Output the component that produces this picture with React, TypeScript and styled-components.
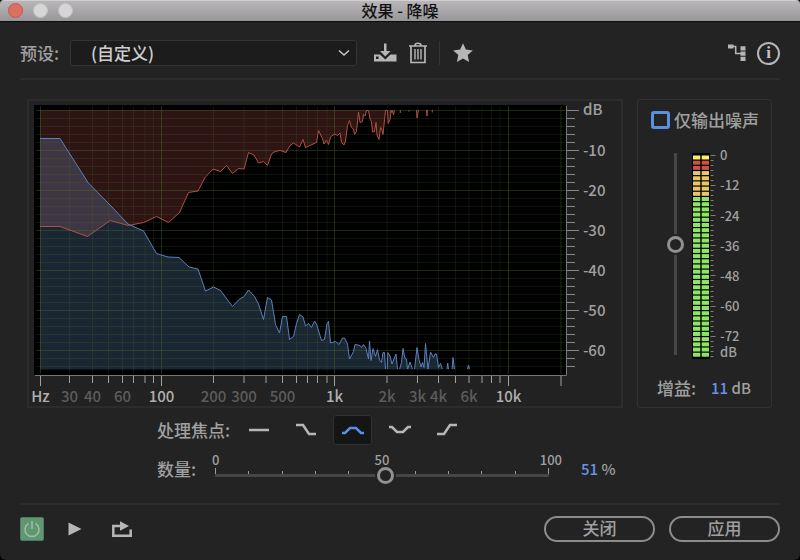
import React, { useState } from "react";
import styled, { createGlobalStyle } from "styled-components";

const GlobalStyle = createGlobalStyle`
  * { box-sizing: border-box; }
  html, body { margin: 0; background: #000; }
  body, button, select, input {
    font-family: "Noto Sans CJK SC", "Noto Sans", sans-serif;
    font-weight: 500;
  }
`;

const FONT = '"Noto Sans CJK SC", "Noto Sans", sans-serif';

const Window = styled.main`
  display: flex;
  flex-direction: column;
  min-height: 100vh;
  background: #232323;
  color: #a0a0a0;
  font-size: 17px;
  line-height: 24px;
  border-radius: 4px 4px 6px 6px;
  overflow: hidden;
`;

const TitleBar = styled.header`
  display: grid;
  grid-template-columns: 1fr auto 1fr;
  align-items: center;
  height: 22px;
  padding: 0 8px 2px;
  background: linear-gradient(#b8b6b8, #989698);
  border-top: 1px solid #cfcfcf;
  border-bottom: 1px solid #0c0c0c;
`;

const Lights = styled.div`
  display: flex;
  gap: 10px;
`;

const Light = styled.button<{ $close?: boolean }>`
  width: 15px;
  height: 15px;
  padding: 0;
  border-radius: 50%;
  border: 1px solid ${(p) => (p.$close ? "#c4584c" : "#c2c0c2")};
  background: ${(p) => (p.$close ? "#dd6e61" : "#d6d6d6")};
`;

const Title = styled.h1`
  margin: 0;
  font-size: 16px;
  line-height: 18px;
  font-weight: 500;
  color: #111;
`;

const Toolbar = styled.div`
  display: flex;
  align-items: center;
  margin: 0 20px;
  padding: 18px 0 12px;
  border-bottom: 2px solid #2c2c2c;
`;

const PresetLabel = styled.label`
  width: 50px;
  white-space: nowrap;
`;

const SelectWrap = styled.div`
  display: grid;
  flex: 0 1 287px;
  align-items: center;
  margin-right: 16px;
  > * { grid-area: 1 / 1; }
  > svg { justify-self: end; margin-right: 7px; pointer-events: none; }
`;

const Select = styled.select`
  appearance: none;
  width: 100%;
  height: 26px;
  padding: 0 28px 0 20px;
  border: 1px solid #343434;
  border-radius: 3px;
  background: #1c1c1c;
  color: #cfcfcf;
  font-size: 17px;
  line-height: 24px;
`;

const IconButton = styled.button<{ $w?: number }>`
  display: grid;
  place-items: center;
  width: ${(p) => p.$w ?? 24}px;
  height: 24px;
  padding: 0;
  border: 0;
  background: none;
  color: #b6b6b6;
  > svg { display: block; }
`;

const IconGroup = styled.div<{ $gap: number; $end?: boolean }>`
  display: flex;
  align-items: center;
  gap: ${(p) => p.$gap}px;
  margin-left: ${(p) => (p.$end ? "auto" : "0")};
`;

const Divider = styled.span`
  width: 1px;
  height: 24px;
  background: #343434;
`;

const InfoButton = styled.button`
  width: 23px;
  height: 23px;
  padding: 0;
  border: 2px solid #b6b6b6;
  border-radius: 50%;
  background: none;
  color: #c4c4c4;
  font-family: "Liberation Serif", serif;
  font-weight: 700;
  font-size: 17px;
  line-height: 18px;
`;

const Panels = styled.section`
  display: flex;
  align-items: stretch;
  gap: 14px;
  padding: 19px 28px 0 27px;
`;

const ChartPanel = styled.div`
  flex: 1;
  min-width: 0;
  border: 2px solid #2c2c2c;
  background: #222;
  > svg { display: block; width: 100%; height: auto; overflow: visible; }
`;

const GainPanel = styled.div`
  display: flex;
  flex-direction: column;
  flex: 0 0 135px;
  padding: 8px 13px 7px;
  border: 1px solid #313131;
  border-radius: 3px;
`;

const CheckLabel = styled.label`
  display: flex;
  align-items: center;
  gap: 4px;
  white-space: nowrap;
  margin-right: -8px;
`;

const Check = styled.input`
  appearance: none;
  flex: none;
  width: 19px;
  height: 18px;
  margin: 0;
  border: 3px solid #5c8ee2;
  border-radius: 3px;
  &:checked { background: #5c8ee2; }
`;

const GainBody = styled.div`
  display: flex;
  align-items: flex-start;
  gap: 8px;
  padding: 21px 0 0 16px;
  > svg { overflow: visible; }
`;

const VerticalRange = styled.input`
  appearance: none;
  writing-mode: vertical-lr;
  direction: rtl;
  width: 17px;
  height: 202px;
  margin: 0;
  background: linear-gradient(#464646, #464646) center / 3px 100% no-repeat;
  &::-webkit-slider-thumb {
    appearance: none;
    width: 17px;
    height: 17px;
    border: 3px solid #919191;
    border-radius: 50%;
    background: #232323;
    box-shadow: 0 0 0 2px #232323;
  }
`;

const GainRow = styled.div`
  display: flex;
  align-items: center;
  justify-content: space-between;
  margin-top: auto;
  padding: 0 7px 0 6px;
`;

const Value = styled.output`
  font-size: 15px;
  white-space: pre;
  > b { color: #6596e6; font-weight: 500; }
`;

const Controls = styled.section`
  display: flex;
  flex-direction: column;
  padding: 7px 157px 0;
`;

const FocusRow = styled.div`
  display: flex;
  align-items: center;
  gap: 8px;
  height: 30px;
`;

const RowLabel = styled.span<{ $w: number }>`
  flex: 0 0 ${(p) => p.$w}px;
  white-space: nowrap;
`;

const FocusButton = styled.button<{ $on: boolean }>`
  display: grid;
  place-items: center;
  width: 39px;
  height: 30px;
  padding: 0;
  border: 1px solid ${(p) => (p.$on ? "#313131" : "transparent")};
  border-radius: 3px;
  background: ${(p) => (p.$on ? "#151515" : "none")};
  color: ${(p) => (p.$on ? "#5c8ee2" : "#b6b6b6")};
`;

const AmountRow = styled.div`
  display: flex;
  align-items: center;
  height: 48px;
`;

const Scale = styled.div`
  flex: 0 1 334px;
  display: grid;
  grid-template-rows: 12px 18px;
  > * { grid-column: 1; }
`;

const ScaleNumbers = styled.div`
  display: grid;
  grid-template-columns: 1fr 1fr 1fr;
  margin: 0 -13px;
  font-size: 13px;
  line-height: 12px;
  > :nth-child(1) { padding-left: 10px; }
  > :nth-child(2) { text-align: center; }
  > :nth-child(3) { text-align: right; }
`;

const Ticks = styled.div`
  grid-row: 2;
  display: flex;
  align-items: flex-end;
  justify-content: space-between;
  height: 9px;
`;

const Tick = styled.i<{ $major: boolean }>`
  width: 1px;
  height: ${(p) => (p.$major ? 7 : 4)}px;
  background: #999;
`;

const Range = styled.input`
  appearance: none;
  grid-row: 2;
  width: 100%;
  height: 18px;
  margin: 0;
  background: linear-gradient(#464646, #464646) center / 100% 3px no-repeat;
  &::-webkit-slider-thumb {
    appearance: none;
    width: 17px;
    height: 17px;
    border: 3px solid #919191;
    border-radius: 50%;
    background: #232323;
    box-shadow: 0 0 0 2px #232323;
  }
`;

const AmountValue = styled(Value)`
  margin-left: 32px;
`;

const Footer = styled.footer`
  display: flex;
  align-items: center;
  margin: auto 20px 0;
  padding: 11px 0 18px;
  border-top: 2px solid #2c2c2c;
`;

const PowerButton = styled.button`
  display: grid;
  place-items: center;
  width: 24px;
  height: 24px;
  padding: 0;
  border: 1px solid #4b7c5b;
  border-radius: 2px;
  background: #5d9870;
  color: #a9b5ad;
`;

const PillGroup = styled.div`
  display: flex;
  gap: 14px;
  margin-left: auto;
`;

const Pill = styled.button`
  width: 111px;
  height: 26px;
  padding: 0 0 2px;
  border: 2px solid #8c8c8c;
  border-radius: 13px;
  background: none;
  color: #a0a0a0;
  font-size: 17px;
  line-height: 20px;
`;

/* ---------- spectrum chart ---------- */

type Line = { x: number; label?: string; major?: boolean };

const FREQUENCIES: Line[] = [
  { x: 40.5, label: "Hz", major: true }, { x: 69.5, label: "30" }, { x: 92.5, label: "40" },
  { x: 108.5 }, { x: 122.5, label: "60" }, { x: 133.5 }, { x: 145 }, { x: 153.5 },
  { x: 161.5, label: "100", major: true }, { x: 213.5, label: "200" }, { x: 244, label: "300" },
  { x: 266 }, { x: 282.5, label: "500" }, { x: 296.5 }, { x: 307.5 }, { x: 317.5 }, { x: 327 },
  { x: 334.5, label: "1k", major: true }, { x: 387, label: "2k" }, { x: 417.5, label: "3k" },
  { x: 438.5, label: "4k" }, { x: 455.5 }, { x: 469, label: "6k" }, { x: 482 }, { x: 491.5 },
  { x: 500 }, { x: 508.5, label: "10k", major: true }, { x: 561, major: true },
];

const LEVELS = Array.from({ length: 33 }, (_, i) => ({
  y: 110.5 + i * 8,
  label: i % 5 === 0 ? (i === 0 ? "dB" : String(-2 * i)) : undefined,
}));

const NOISE =
  "40,138.5 60,138.5 88,182.5 110,205 128,224 143.5,231 156.5,253.5 168,257 179,257.5 189,267 198,269 205.5,291 213.5,287 220.5,290.5 " +
  "232.5,306.5 238.5,300 244,296.5 248.5,290 254.5,296.5 258.5,304 263.5,319.5 267.5,297.5 271.5,300 275.5,324.5 279.5,333 282.5,316.5 " +
  "286.5,316.5 289.5,339.5 293.5,336.5 296.5,323.5 299.5,314.5 303,317 305.5,326 308.5,323.5 311.5,327.5 314.5,321 316.5,324 321.5,340.5 " +
  "324.5,339.5 327,323.5 328.5,321.5 330.5,343 335.5,341.5 339,344.5 342.5,338 344.5,338 347.5,344 349.5,359 353.5,351.5 355,344.5 " +
  "360,345.5 361.5,347.5 363.5,344.5 366,348.5 368.5,359 369.5,341 371,360.5 373,348.5 375.5,356.5 377.5,349.5 379.5,360 381.5,362.5 " +
  "383,352.5 384.5,352.5 385.5,369.5 387.2,369.5 387.8,352.5 390,356 392,364 396,354 397.5,369.5 399.5,369.5 401.5,362.5 403,348.5 405,358.5 " +
  "406.5,359 407.5,369.5 410,362 412.5,369.5 414.5,369.5 417,347.5 419,359.5 421,367 422.5,362.5 424,367.5 425.5,343.5 428,369.5 " +
  "430.5,352 433.5,357.5 435,354 436.5,354 438.5,367.5 440.5,363.5 442.5,369.5 447,369.5 447.7,363 448.5,369.5 452,369.5 453,357.5 " +
  "454.5,369.5 467.5,369.5 468.5,365 469.5,369.5";

const THRESHOLD =
  "40,226.5 60,226.5 87.5,236.5 110,220.5 128.5,225.5 143.5,222.5 156.5,216.5 168.5,222.5 179.5,212.5 188.5,192.5 198,191 205,177.5 " +
  "213,169 220.5,171.5 226.5,165.5 232.5,173.5 238.5,168.5 244,169 248.5,152.5 254,155 258.5,163 263.5,161.5 267.5,165.5 271.5,154 " +
  "275,151.5 280,150.5 286,152.5 290,145.5 293.5,143 299.5,147 303,139.5 305.5,147.5 316.5,142.5 318.5,130.5 322.5,138.5 324,144 " +
  "326.5,140 328.5,144.5 330.5,137 334.5,134 337.5,135.5 340,133 341.5,142.5 344,145 345.5,141 347.5,125.5 349.5,120.5 351.5,127.5 " +
  "353.5,129 354.5,134.5 356.5,131.5 358.5,112 360,122.5 362.5,121.5 363.5,114.5 365,116 366.5,110.5 368.5,110.5 370,119 371.5,121.5 " +
  "372.5,132 374.5,131.5 376,122.5 377,135 379,139.5 380.5,127.5 381.5,128.5 383,134.5 385.5,110.5 387.5,110.5 388.2,123.5 390,119.5 " +
  "391,110.5 391.7,112.5 392.5,110.5 393.5,115 394.5,110.5";

const PEAKS = "M400.3 110v3M409 110v1.5M416.5 110l.5 8l1.5 -8M426.6 110l.3 6l.6 -6M432.3 110v2.5";

function Spectrum() {
  return (
    <svg viewBox="29 101 592 305" role="img" aria-label="噪声频谱" fontFamily={FONT}>
      <clipPath id="plot">
        <rect x="40" y="110" width="526" height="259" />
      </clipPath>
      <rect x="34" y="105" width="532" height="270" fill="#000" />
      <polygon points={`40,110 ${THRESHOLD} 394.5,110`} fill="#2e1514" />
      <polygon points={`40,369.5 ${NOISE} 469.5,369.5`} fill="#87beff" fillOpacity="0.2" />
      {FREQUENCIES.map((f) => (
        <path key={f.x} d={`M${f.x} 106V374`} stroke="#4c7a28" strokeOpacity={f.major ? 0.38 : 0.17} />
      ))}
      {LEVELS.map((l) => (
        <path key={l.y} d={`M36 ${l.y}H566`} stroke="#4c7a28" strokeOpacity={l.label ? 0.34 : 0.17} />
      ))}
      <polyline points={THRESHOLD} fill="none" stroke="#ad5148" />
      <path d={PEAKS} fill="none" stroke="#ad5148" />
      <polyline points={NOISE} fill="none" stroke="#5b80bd" clipPath="url(#plot)" />
      <path d="M35 375.5H566.5V106" fill="none" stroke="#777" />
      {LEVELS.map((l) => (
        <path key={l.y} d={`M567 ${l.y}H${l.label ? 579 : 575}`} stroke="#868686" />
      ))}
      {FREQUENCIES.map((f) => (
        <path key={f.x} d={`M${f.x} 376V${f.major ? 386 : 383}`} stroke="#a0a0a0" />
      ))}
      {LEVELS.filter((l) => l.label).map((l) => (
        <text key={l.y} x="583" y={l.label === "dB" ? l.y + 4 : l.y + 5} fontSize="15" fontWeight="500" fill="#a0a0a0">
          {l.label}
        </text>
      ))}
      {FREQUENCIES.filter((f) => f.label).map((f) => (
        <text key={f.x} x={f.x} y="402" textAnchor="middle" fontSize="15" fontWeight="500" fill={f.major ? "#b0b0b0" : "#5c5c5c"}>
          {f.label}
        </text>
      ))}
    </svg>
  );
}

/* ---------- level meter ---------- */

const ROWS = 39;
const rowColor = (i: number) => (i === 0 ? "#fbee62" : i < 3 ? "#cb5248" : i < 8 ? "#e9c668" : "#8de566");
const METER_LABELS = [0, 30, 61, 91, 121, 151, 181];

function Meter() {
  return (
    <svg width="56" height="208" viewBox="0 0 56 208" role="img" aria-label="电平" fontFamily={FONT}>
      <rect width="18" height="206" fill="#000" />
      {Array.from({ length: ROWS }, (_, i) => (
        <g key={i} fill={rowColor(i)}>
          <rect x="1" y={2.5 + i * 5.19} width="7.3" height="4" />
          <rect x="9.7" y={2.5 + i * 5.19} width="7.3" height="4" />
        </g>
      ))}
      {Array.from({ length: 41 }, (_, i) => (
        <path key={i} d={`M18.5 ${Math.round(2 + i * 5.02) + 0.5}h${i % 6 === 0 ? 5 : 3}`} stroke="#7d7d7d" />
      ))}
      {METER_LABELS.map((y, i) => (
        <text key={y} x="28" y={y + 7} fontSize="13" fontWeight="500" fill="#a0a0a0">
          {i === 0 ? "0" : String(-12 * i)}
        </text>
      ))}
      <text x="28" y="204" fontSize="13" fontWeight="500" fill="#a0a0a0">dB</text>
    </svg>
  );
}

const FOCUS_SHAPES = [
  { name: "全部频率", d: "M1 8H21" },
  { name: "低频", d: "M1 3H8L14 12H21" },
  { name: "中频", d: "M0 11H3L8 6H14L19 11H22" },
  { name: "两端频率", d: "M0 5H3L8 10H14L19 5H22" },
  { name: "高频", d: "M1 12H8L14 3H21" },
];

export default function App() {
  const [focus, setFocus] = useState(2);
  const [amount, setAmount] = useState(51);
  const [gain, setGain] = useState(11);
  return (
    <>
      <GlobalStyle />
      <Window>
        <TitleBar>
          <Lights>
            <Light $close aria-label="关闭窗口" />
            <Light aria-label="最小化" />
            <Light aria-label="缩放" />
          </Lights>
          <Title>效果 - 降噪</Title>
        </TitleBar>

        <Toolbar>
          <PresetLabel htmlFor="preset">预设:</PresetLabel>
          <SelectWrap>
            <Select id="preset" defaultValue="custom">
              <option value="custom">(自定义)</option>
            </Select>
            <svg width="12" height="8" viewBox="0 0 12 8" fill="none" stroke="#c4c4c4" strokeWidth="1.6">
              <path d="M1 1.5L6 6L11 1.5" />
            </svg>
          </SelectWrap>
          <IconGroup $gap={9}>
            <IconButton aria-label="保存预设">
              <svg width="24" height="20" viewBox="0 0 24 20" fill="currentColor">
                <path d="M11 0.500h2.500v7.500h4l-5.200 5.500l-5.300 -5.500h4z" />
                <path fillRule="evenodd" d="M1 11.500H7L12.300 16.500L17.500 11.500H23.500V18.500H1zM3 13.500v2.600h2.600v-2.600z" />
              </svg>
            </IconButton>
            <IconButton aria-label="删除预设">
              <svg width="20" height="24" viewBox="0 0 20 24" fill="none" stroke="currentColor" strokeWidth="1.7">
                <path d="M1 5H19M7 4.500C7 1.500 13 1.500 13 4.500M3 5V21.500H17V5" />
                <path d="M7 8V18.500M10 8V18.500M13 8V18.500" strokeWidth="1.400" />
              </svg>
            </IconButton>
            <Divider />
            <IconButton aria-label="收藏" $w={28}>
              <svg width="20" height="20" viewBox="0 0 20 20" fill="currentColor">
                <path d="M10 0.300L12.900 6.600L19.800 7.400L14.700 12L16.100 18.900L10 15.400L3.900 18.900L5.300 12L0.200 7.400L7.100 6.600Z" />
              </svg>
            </IconButton>
          </IconGroup>
          <IconGroup $gap={10} $end>
            <IconButton aria-label="路由" $w={20}>
              <svg width="20" height="18" viewBox="0 0 20 18" fill="currentColor">
                <path d="M1 0.500h5.500v4H1zM13.500 2.200h5v4.200h-5zM13.500 7.500h5v4.200h-5zM13.500 12.800h5v4.200h-5z" />
                <path d="M6 2.600H8.700V9.600H14" fill="none" stroke="currentColor" strokeWidth="1.500" />
              </svg>
            </IconButton>
            <InfoButton aria-label="信息">i</InfoButton>
          </IconGroup>
        </Toolbar>

        <Panels>
          <ChartPanel>
            <Spectrum />
          </ChartPanel>
          <GainPanel>
            <CheckLabel>
              <Check type="checkbox" />
              仅输出噪声
            </CheckLabel>
            <GainBody>
              <VerticalRange type="range" min={-25} max={40} value={gain} aria-label="增益" onChange={(e) => setGain(+e.target.value)} />
              <Meter />
            </GainBody>
            <GainRow>
              <span>增益:</span>
              <Value><b>{gain}</b> dB</Value>
            </GainRow>
          </GainPanel>
        </Panels>

        <Controls>
          <FocusRow>
            <RowLabel $w={74}>处理焦点:</RowLabel>
            {FOCUS_SHAPES.map((s, i) => (
              <FocusButton key={s.name} $on={focus === i} aria-label={s.name} aria-pressed={focus === i} onClick={() => setFocus(i)}>
                <svg width="22" height="16" viewBox="0 0 22 16" fill="none" stroke="currentColor" strokeWidth="2.500">
                  <path d={s.d} />
                </svg>
              </FocusButton>
            ))}
          </FocusRow>
          <AmountRow>
            <RowLabel as="label" htmlFor="amount" $w={58}>数量:</RowLabel>
            <Scale>
              <ScaleNumbers>
                <span>0</span>
                <span>50</span>
                <span>100</span>
              </ScaleNumbers>
              <Ticks>
                {Array.from({ length: 11 }, (_, i) => <Tick key={i} $major={i % 5 === 0} />)}
              </Ticks>
              <Range id="amount" type="range" min={0} max={100} value={amount} onChange={(e) => setAmount(+e.target.value)} />
            </Scale>
            <AmountValue><b>{amount}</b> %</AmountValue>
          </AmountRow>
        </Controls>

        <Footer>
          <IconGroup $gap={19}>
            <PowerButton aria-label="启用效果">
              <svg width="18" height="18" viewBox="0 0 18 18" fill="none" stroke="currentColor" strokeWidth="1.6">
                <path d="M9 1V9M5.500 3.500A7 7 0 1 0 12.500 3.500" />
              </svg>
            </PowerButton>
            <IconButton aria-label="播放">
              <svg width="14" height="14" viewBox="0 0 14 14" fill="currentColor">
                <path d="M0.500 0.500L13.500 7L0.500 13.500z" />
              </svg>
            </IconButton>
            <IconButton aria-label="导出" $w={32}>
              <svg width="20" height="17" viewBox="0 0 20 17" fill="none">
                <path d="M9 5H1.300V14.800H18.700V8.500" stroke="currentColor" strokeWidth="2.500" />
                <path d="M8 0.300L17 5L8 9.700Z" fill="currentColor" />
              </svg>
            </IconButton>
          </IconGroup>
          <PillGroup>
            <Pill>关闭</Pill>
            <Pill>应用</Pill>
          </PillGroup>
        </Footer>
      </Window>
    </>
  );
}
